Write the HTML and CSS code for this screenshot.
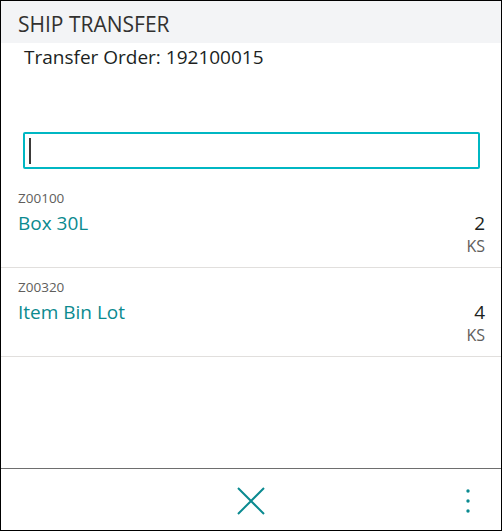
FILE: index.html
```html
<!DOCTYPE html>
<html>
<head>
<meta charset="utf-8">
<link rel="stylesheet" href="styles.css">
</head>
<body>
<div class="screen">
  <header class="header">SHIP TRANSFER</header>
  <div class="order">Transfer Order: 192100015</div>
  <div class="search-wrap">
    <div class="search"><span class="caret"></span></div>
  </div>
  <ul class="items">
    <li class="item">
      <div class="item-main">
        <div class="code">Z00100</div>
        <div class="name">Box 30L</div>
      </div>
      <div class="item-qty">
        <div class="qty">2</div>
        <div class="unit">KS</div>
      </div>
    </li>
    <li class="item">
      <div class="item-main">
        <div class="code">Z00320</div>
        <div class="name">Item Bin Lot</div>
      </div>
      <div class="item-qty">
        <div class="qty">4</div>
        <div class="unit">KS</div>
      </div>
    </li>
  </ul>
  <footer class="footer">
    <svg class="close" width="28" height="28" viewBox="0 0 28 28"><path d="M1 1L27 27M27 1L1 27" stroke="#0a8a90" stroke-width="2" fill="none"/></svg>
    <svg class="more" width="6" height="26" viewBox="0 0 6 26"><circle cx="3" cy="3" r="1.7" fill="#0a8a90"/><circle cx="3" cy="13" r="1.7" fill="#0a8a90"/><circle cx="3" cy="23" r="1.7" fill="#0a8a90"/></svg>
  </footer>
</div>
</body>
</html>
```
FILE: styles.css
```css
* { box-sizing: border-box; }
html, body { margin: 0; padding: 0; background: #fff; }
body { font-family: "Open Sans", "Noto Sans", sans-serif; color: #201f1e; }
.screen {
  width: 502px;
  height: 531px;
  border: 1px solid #000;
  display: flex;
  flex-direction: column;
}
.header {
  height: 42px;
  background: #f3f4f6;
  padding: 9px 0 0 17px;
  font-size: 21px;
  line-height: 28px;
  color: #323130;
}
.order {
  padding: 2px 0 0 23px;
  font-size: 19px;
  line-height: 24px;
}
.search-wrap {
  padding: 63px 21px 0 22px;
}
.search {
  height: 37px;
  border: 2px solid #00b7c3;
  border-radius: 2px;
  padding: 4px 0 0 4px;
}
.caret {
  display: block;
  width: 2px;
  height: 26px;
  background: #3b3a39;
}
.items {
  list-style: none;
  margin: 10px 0 0;
  padding: 0;
}
.item {
  display: flex;
  justify-content: space-between;
  border-bottom: 1px solid #e1dfdd;
  padding: 11px 16px 0 17px;
  height: 89px;
}
.code { font-size: 13.5px; line-height: 16px; color: #605e5c; }
.name { font-size: 19px; line-height: 24px; color: #0b8a8f; margin-top: 5px; }
.item-qty { text-align: right; margin-top: 21px; }
.qty { font-size: 19px; line-height: 24px; }
.unit { font-size: 16px; line-height: 20px; color: #605e5c; margin-top: 1px; }
.footer {
  margin-top: auto;
  height: 62px;
  border-top: 1px solid #6e6e6e;
  display: grid;
  grid-template-columns: 1fr auto 1fr;
  align-items: center;
}
.close { grid-column: 2; margin-top: 2px; }
.more { grid-column: 3; justify-self: end; margin-right: 30px; margin-top: 2px; }
```
